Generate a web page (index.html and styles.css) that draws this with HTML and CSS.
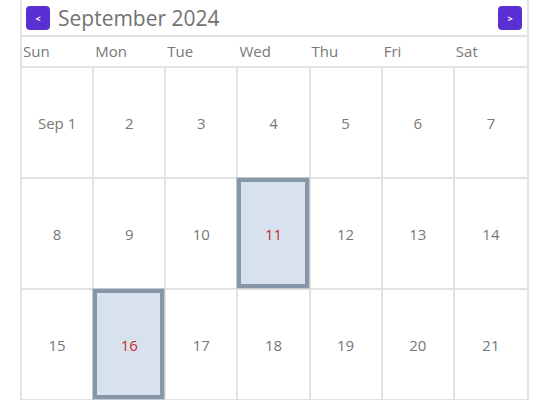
FILE: index.html
```html
<!DOCTYPE html>
<html>
<head>
<meta charset="utf-8">
<link rel="stylesheet" href="styles.css">
</head>
<body>
<div class="cal">
  <div class="head">
    <div class="left">
      <button class="nav">&lt;</button>
      <span class="title">September 2024</span>
    </div>
    <button class="nav">&gt;</button>
  </div>
  <div class="dows">
    <div class="dow">Sun</div><div class="dow">Mon</div><div class="dow">Tue</div><div class="dow">Wed</div><div class="dow">Thu</div><div class="dow">Fri</div><div class="dow">Sat</div>
  </div>
  <div class="grid">
    <div class="cell">Sep 1</div><div class="cell">2</div><div class="cell">3</div><div class="cell">4</div><div class="cell">5</div><div class="cell">6</div><div class="cell">7</div>
    <div class="cell">8</div><div class="cell">9</div><div class="cell">10</div><div class="cell sel">11</div><div class="cell">12</div><div class="cell">13</div><div class="cell">14</div>
    <div class="cell">15</div><div class="cell sel">16</div><div class="cell">17</div><div class="cell">18</div><div class="cell">19</div><div class="cell">20</div><div class="cell">21</div>
  </div>
</div>
</body>
</html>
```
FILE: styles.css
```css
html, body { margin: 0; padding: 0; background: #fff; }
body { font-family: "Open Sans", "DejaVu Sans", sans-serif; color: #777; }
.cal {
  margin-left: 20px;
  width: 505px;
  border-left: 2px solid #e2e2e2;
  border-right: 2px solid #e2e2e2;
  border-bottom: 2px solid #e2e2e2;
}
.head {
  height: 35px;
  display: flex;
  align-items: center;
  justify-content: space-between;
  padding: 0 5px 0 4px;
  border-bottom: 2px solid #e2e2e2;
}
.left { display: flex; align-items: center; gap: 8px; }
.nav {
  width: 24px; height: 24px;
  border: 0; border-radius: 4px;
  background: #5a2fd4; color: #fff;
  font-family: "Open Sans", sans-serif;
  font-size: 9px; font-weight: 700;
  padding: 0; margin-top: 1px;
}
.title { font-size: 21px; color: #727272; line-height: 28px; }
.dows {
  display: grid;
  grid-template-columns: repeat(7, 1fr);
  height: 29px;
  border-bottom: 2px solid #e2e2e2;
}
.dow { font-size: 15px; line-height: 29px; padding-left: 1px; color: #777; }
.grid { display: grid; grid-template-columns: repeat(7, 1fr); }
.cell {
  height: 109px;
  display: flex; align-items: center; justify-content: center;
  font-size: 15px; color: #777;
  border-right: 2px solid #e2e2e2;
  border-bottom: 2px solid #e2e2e2;
}
.cell:nth-child(7n) { border-right: 0; }
.cell:nth-last-child(-n+7) { border-bottom: 0; }
.cell.sel {
  position: relative;
  background: #d8e2ee;
  color: #c42a2a;
}
.cell.sel::after {
  content: "";
  position: absolute;
  top: -1px; left: -1px; right: 0; bottom: 0;
  border: 4px solid #8797a8;
  box-shadow: 0 0 0 1px #c3cad3;
  pointer-events: none;
}
```
